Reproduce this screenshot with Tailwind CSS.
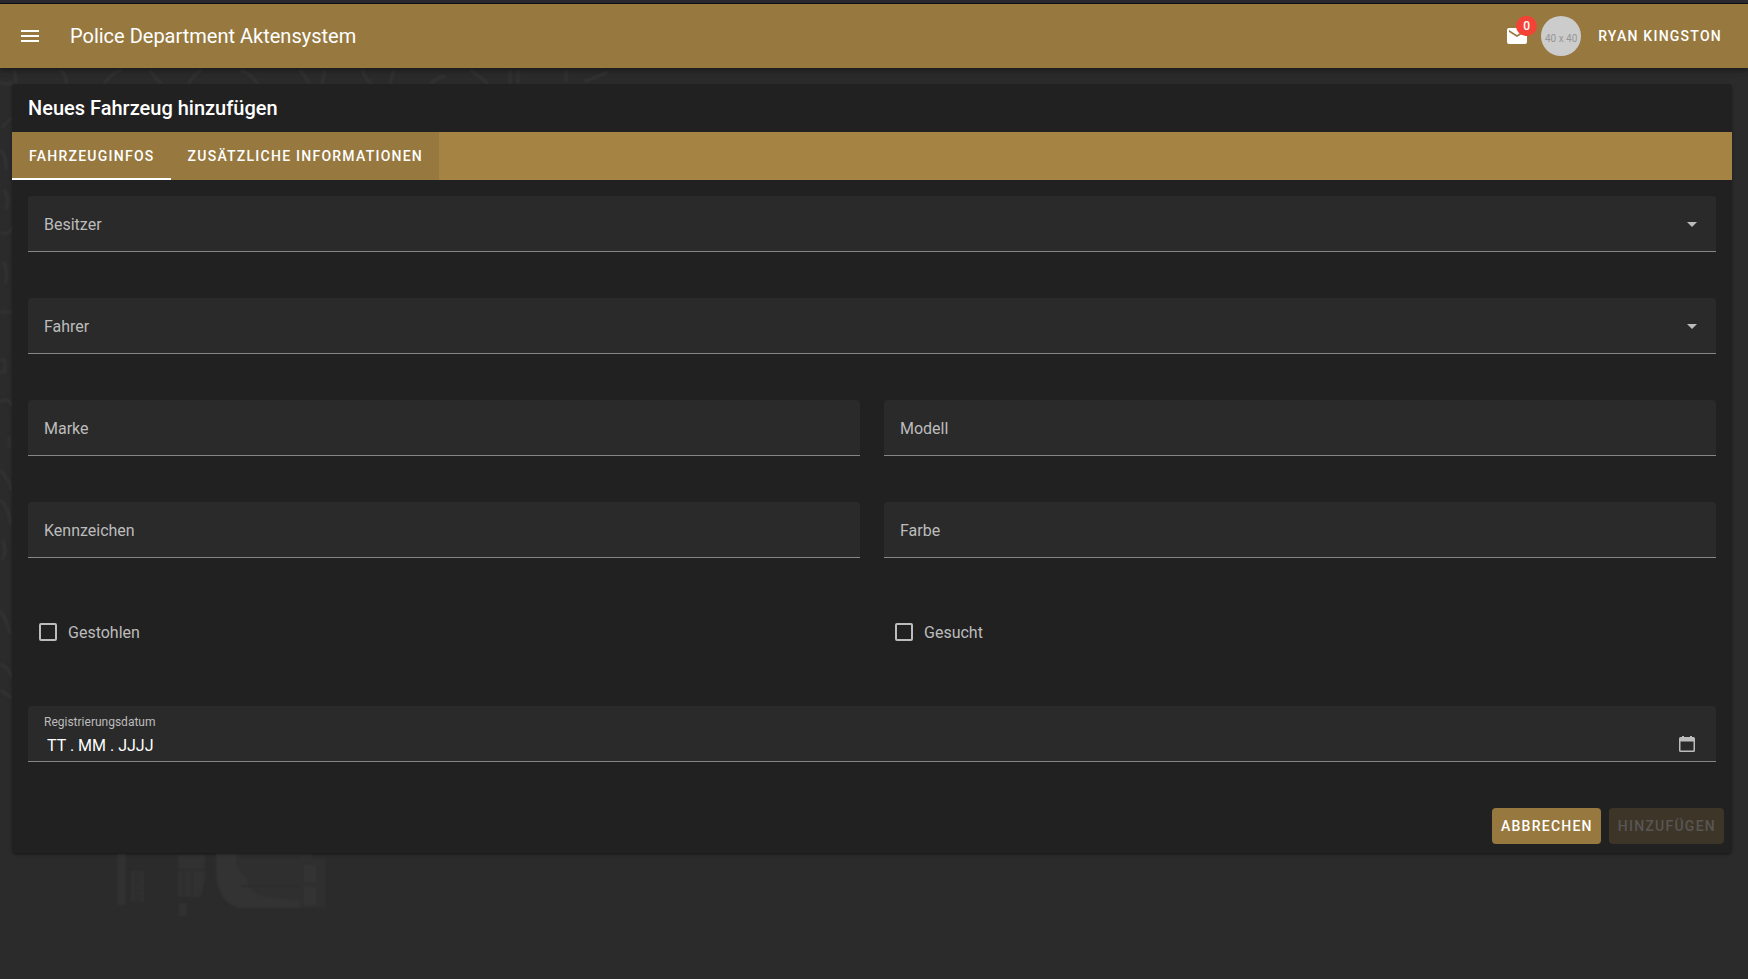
<!DOCTYPE html>
<html lang="de">
<head>
<meta charset="utf-8">
<title>Police Department Aktensystem</title>
<script src="https://cdn.jsdelivr.net/npm/@tailwindcss/browser@4"></script>
</head>
<body class="relative isolate min-h-screen overflow-x-hidden bg-[#2b2b2b] font-['Roboto',sans-serif] text-base text-white">

<!-- Faint map backdrop -->
<svg class="absolute left-0 top-0 -z-10 h-[979px] w-[700px]" viewBox="0 0 700 979" fill="none" aria-hidden="true">
  <g stroke="#333" stroke-width="3" class="blur-[1px]">
    <path d="M14 70q2 6 2 14M60 70q8 6 6 14M104 84q10-14 18-14M150 70q6 10 12 14M188 84q8-12 14-14M240 70q12 4 18 14M300 70l10 14M322 84l3-14M362 70q4 10 10 14M390 84l4-14M430 84q10-8 16-8M470 70q12 8 18 14M510 70v14M518 84v-14M566 70v12M584 82l24-10"/>
    <path d="M0 82q6 4 12 0M2 128q6-8 10-10M0 150q7 6 6 20M4 190q6 8 2 20M0 232q9 4 12-4M3 262q6 8 2 22M0 312h12M0 360h5v12H0M0 402q8-6 12 4M9 436v12M0 470q8 8 12 20M0 500q10 8 10 24M2 540q6 10 0 20M0 610q6 8 10 24M0 664q10 4 12 14M0 690l12 8"/>
  </g>
  <g class="blur-[1px]">
    <path fill="#313131" d="M117 852h9v53h-9zM131 871h13v31h-13zM178 855h27v24l-4 18h-23zM179 903h8v13h-8z"/>
    <path fill="#2f2f2f" d="M216 852h96v6h14v50h-88q-20-6-22-34z"/>
    <path fill="#333" d="M216 852h20v10q3 10 10 16 2 12 14 18l40 5v7h-62q-20-6-22-34zM304 865h12v17h-12zM304 887h12v18h-12z"/>
    <path stroke="#292929" stroke-width="1" d="M135 874h5v6h-5zM135 883h5v8h-5zM135 895h5v5h-5zM178 870h27M184 872v24M192 872v24M240 857h60M240 886h60"/>
  </g>
</svg>

<div class="h-1 border-b border-[#111114] bg-[#2b2a33]"></div>

<header class="relative flex h-16 items-center bg-[#97793f] pl-[18px] pr-4 shadow-[0_2px_4px_-1px_rgba(0,0,0,0.2),0_4px_5px_rgba(0,0,0,0.14),0_1px_10px_rgba(0,0,0,0.12)]">
  <button type="button" aria-label="Menü" class="size-6">
    <svg class="size-6" viewBox="0 0 24 24" fill="currentColor" aria-hidden="true"><path d="M3 6h18v2H3V6m0 5h18v2H3v-2m0 5h18v2H3v-2z"/></svg>
  </button>
  <h1 class="ml-7 flex-1 text-xl leading-6">Police Department Aktensystem</h1>
  <button type="button" aria-label="Nachrichten" class="relative size-6">
    <svg class="size-6" viewBox="0 0 24 24" fill="currentColor" aria-hidden="true"><path d="M20 8l-8 5-8-5V6l8 5 8-5m0-2H4c-1.110 0-2 .89-2 2v12a2 2 0 0 0 2 2h16a2 2 0 0 0 2-2V6c0-1.110-.9-2-2-2z"/></svg>
    <span class="absolute -top-2 left-[11px] flex h-5 w-[21px] items-center justify-center rounded-full bg-[#f44336] text-xs font-medium">0</span>
  </button>
  <span class="ml-3 flex size-10 items-center justify-center rounded-full bg-[#ccc] pt-1 text-[10px] text-[#969696]">40 x 40</span>
  <button type="button" class="h-9 pl-[17px] pr-2.5 text-sm font-medium tracking-[1.25px]">RYAN KINGSTON</button>
</header>

<main class="px-3 py-4 pr-4">
  <form class="rounded bg-[#212121] shadow-[0_3px_1px_-2px_rgba(0,0,0,0.2),0_2px_2px_rgba(0,0,0,0.14),0_1px_5px_rgba(0,0,0,0.12)]">
    <h2 class="flex h-12 items-center px-4 text-xl font-medium">Neues Fahrzeug hinzufügen</h2>
    <div role="tablist" class="flex h-12 bg-[#a58343] text-sm font-medium tracking-[1.25px]">
      <button type="button" role="tab" aria-selected="true" class="border-b-2 border-white bg-[#97793f] pl-[17px] pr-4 pt-0.5">FAHRZEUGINFOS</button>
      <button type="button" role="tab" aria-selected="false" class="bg-[#97793f] pl-[17px] pr-4">ZUSÄTZLICHE INFORMATIONEN</button>
    </div>

    <div class="grid grid-cols-2 gap-x-6 gap-y-[46px] px-4 pb-[38px] pt-4">
      <div class="relative col-span-2">
        <label for="owner" class="pointer-events-none absolute left-4 top-[17px] text-[#bcbcbc]">Besitzer</label>
        <select id="owner" class="h-14 w-full appearance-none rounded-t border-b border-[#868686] bg-[#2a2a2a] px-4"><option></option></select>
        <svg class="pointer-events-none absolute right-3 top-4 size-6 text-[#bcbcbc]" viewBox="0 0 24 24" fill="currentColor" aria-hidden="true"><path d="M7 10l5 5 5-5H7z"/></svg>
      </div>
      <div class="relative col-span-2">
        <label for="driver" class="pointer-events-none absolute left-4 top-[17px] text-[#bcbcbc]">Fahrer</label>
        <select id="driver" class="h-14 w-full appearance-none rounded-t border-b border-[#868686] bg-[#2a2a2a] px-4"><option></option></select>
        <svg class="pointer-events-none absolute right-3 top-4 size-6 text-[#bcbcbc]" viewBox="0 0 24 24" fill="currentColor" aria-hidden="true"><path d="M7 10l5 5 5-5H7z"/></svg>
      </div>
      <div class="relative">
        <label for="brand" class="pointer-events-none absolute left-4 top-[17px] text-[#bcbcbc]">Marke</label>
        <input id="brand" type="text" class="h-14 w-full rounded-t border-b border-[#868686] bg-[#2a2a2a] px-4">
      </div>
      <div class="relative">
        <label for="model" class="pointer-events-none absolute left-4 top-[17px] text-[#bcbcbc]">Modell</label>
        <input id="model" type="text" class="h-14 w-full rounded-t border-b border-[#868686] bg-[#2a2a2a] px-4">
      </div>
      <div class="relative">
        <label for="plate" class="pointer-events-none absolute left-4 top-[17px] text-[#bcbcbc]">Kennzeichen</label>
        <input id="plate" type="text" class="h-14 w-full rounded-t border-b border-[#868686] bg-[#2a2a2a] px-4">
      </div>
      <div class="relative">
        <label for="color" class="pointer-events-none absolute left-4 top-[17px] text-[#bcbcbc]">Farbe</label>
        <input id="color" type="text" class="h-14 w-full rounded-t border-b border-[#868686] bg-[#2a2a2a] px-4">
      </div>
      <label class="flex h-14 items-center gap-[11px] pl-[11px] text-[#bcbcbc]">
        <input type="checkbox" class="size-[18px] appearance-none rounded-xs border-2 border-[#bcbcbc] checked:bg-[#97793f]">
        <span class="pt-0.5">Gestohlen</span>
      </label>
      <label class="flex h-14 items-center gap-[11px] pl-[11px] text-[#bcbcbc]">
        <input type="checkbox" class="size-[18px] appearance-none rounded-xs border-2 border-[#bcbcbc] checked:bg-[#97793f]">
        <span class="pt-0.5">Gesucht</span>
      </label>
      <div class="relative col-span-2 flex h-14 flex-col rounded-t border-b border-[#868686] bg-[#2a2a2a] px-4 pt-2">
        <label for="registered" class="text-xs text-[#bcbcbc]">Registrierungsdatum</label>
        <input id="registered" type="text" value="TT . MM . JJJJ" class="h-8 w-full px-[3px]">
        <button type="button" aria-label="Datum auswählen" class="absolute right-5 top-[29px] size-[18px] text-[#bcbcbc]">
          <svg class="size-[18px]" viewBox="0 0 18 18" fill="currentColor" aria-hidden="true"><path fill-rule="evenodd" d="M4 1h2v1h6V1h2v1h1.500A1.500 1.500 0 0 1 17 3.500v12a1.500 1.500 0 0 1-1.500 1.500h-13A1.500 1.500 0 0 1 1 15.500v-12A1.500 1.500 0 0 1 2.500 2H4V1zM2.500 6.500v9h13v-9h-13z"/></svg>
        </button>
      </div>
    </div>

    <div class="flex justify-end gap-2 px-2 pb-[9px] pt-2 text-sm font-medium tracking-[1.25px]">
      <button type="button" class="h-9 rounded bg-[#97793f] pl-[9px] pr-2">ABBRECHEN</button>
      <button type="submit" disabled class="h-9 rounded bg-[#3d3528] pl-[9px] pr-2 text-[#585654]">HINZUFÜGEN</button>
    </div>
  </form>
</main>
</body>
</html>
